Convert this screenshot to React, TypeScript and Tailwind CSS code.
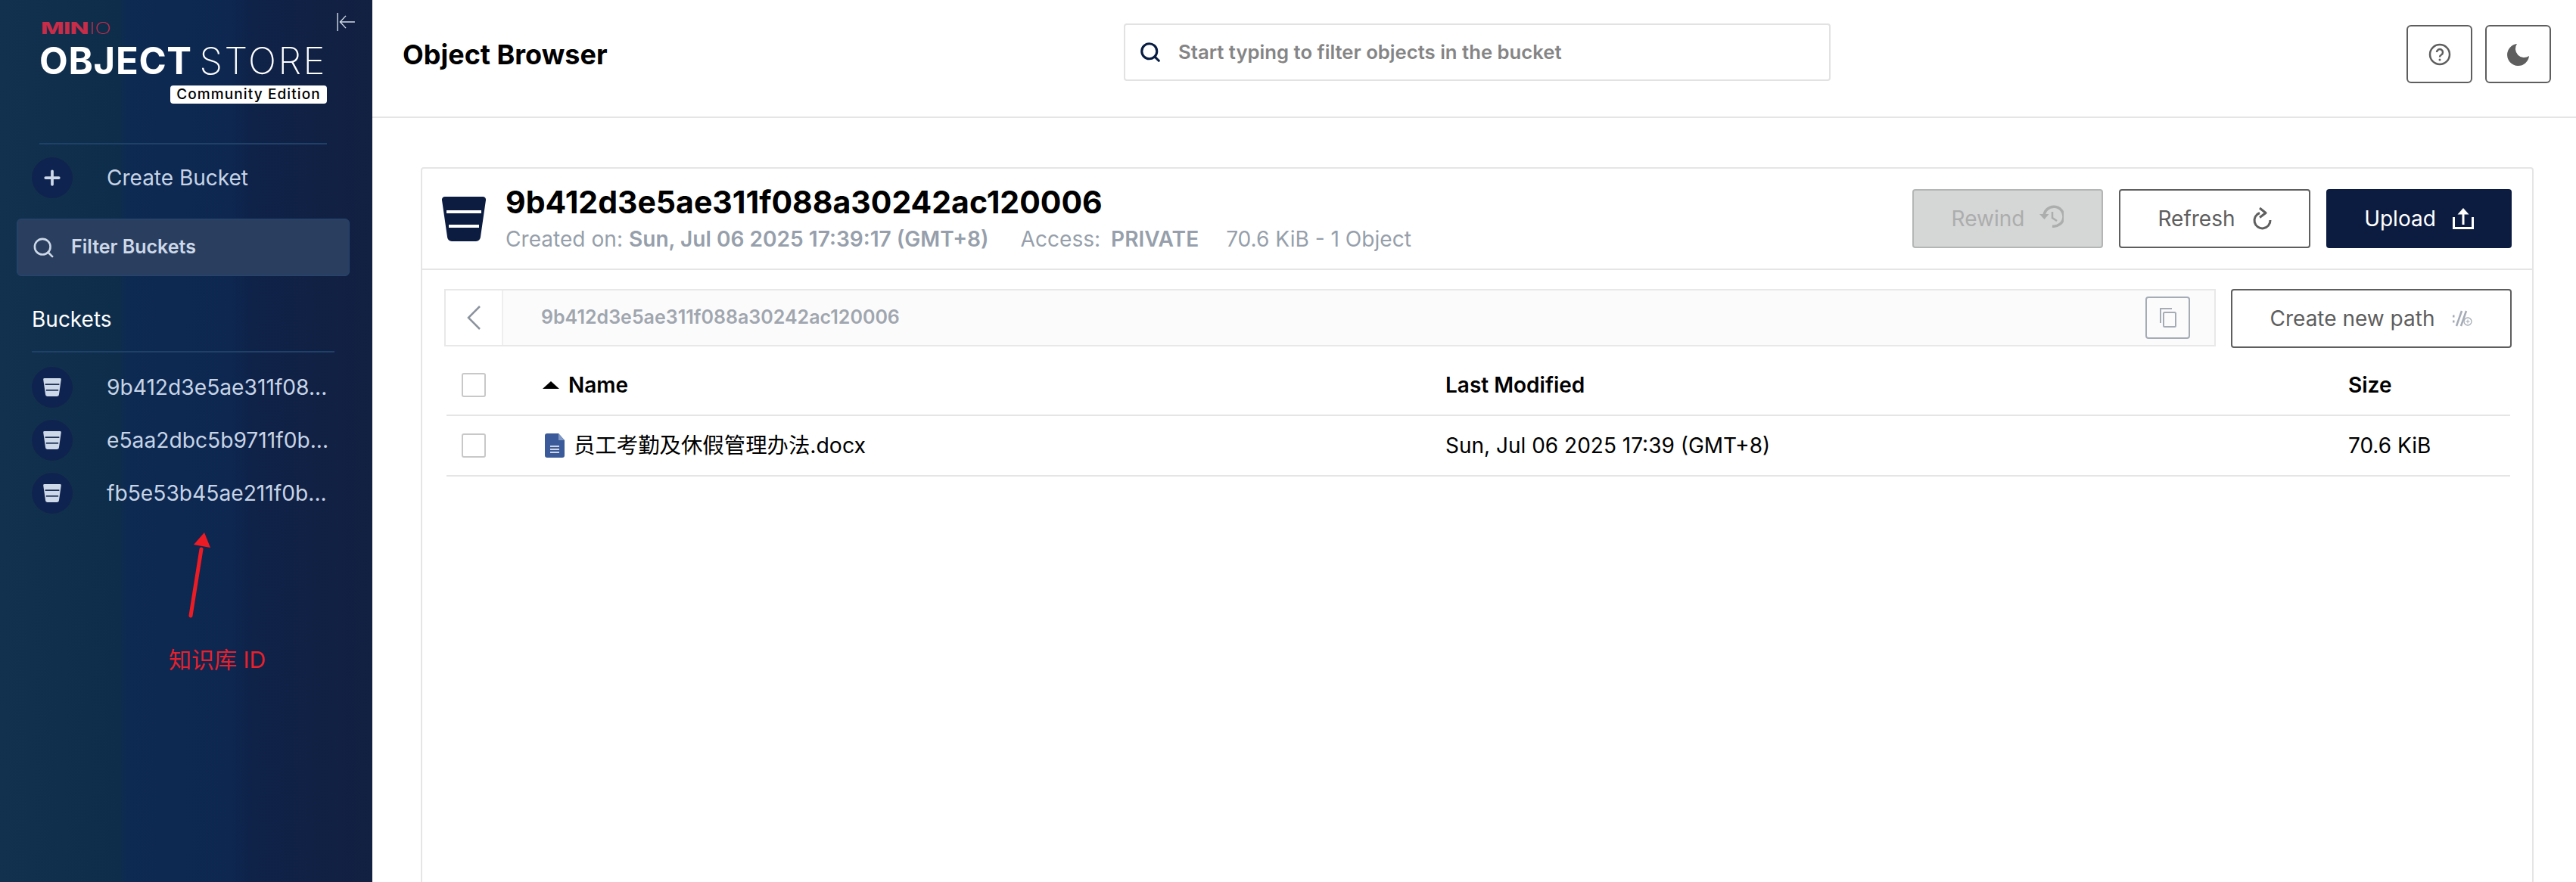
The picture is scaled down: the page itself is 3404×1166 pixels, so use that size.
import { Plus, Search } from 'lucide-react';

const font = "font-['Inter','Noto_Sans_CJK_SC',sans-serif]";
const buckets = ['9b412d3e5ae311f08...', 'e5aa2dbc5b9711f0b...', 'fb5e53b45ae211f0b...'];

function BucketIcon({ className, stripe }: { className: string; stripe: string }) {
  return (
    <svg viewBox="0 0 58 59" className={className}>
      <path d="M4 0h50a4 4 0 0 1 4 4.500L51 53a6 6 0 0 1-6 6H13a6 6 0 0 1-6-6L0 4.500A4 4 0 0 1 4 0z" fill="currentColor" />
      <rect x="6" y="18" width="46" height="4" fill={stripe} />
      <rect x="9" y="37" width="40" height="4" fill={stripe} />
    </svg>
  );
}

function Checkbox() {
  return <div className="h-[32px] w-[32px] rounded-[3px] border-2 border-[#c8c8c8] bg-white" />;
}

function OutlineButton({ label, children, width }: { label: string; children: React.ReactNode; width: string }) {
  return (
    <div className={`flex h-[78px] items-center justify-center gap-[22px] rounded-[4px] border-2 border-[#5e5e5e] bg-white text-[28px] text-[#5e5e5e] ${width}`}>
      {label}
      {children}
    </div>
  );
}

export default function App() {
  return (
    <div className={`flex h-screen w-full overflow-hidden bg-white ${font}`}>
      {/* sidebar */}
      <aside className="relative flex w-[492px] shrink-0 flex-col bg-[linear-gradient(90deg,#12314f_0%,#0e2d4b_32%,#0d2a52_34%,#0d2750_62%,#0f2248_68%,#122041_100%)]">
        <svg viewBox="0 0 24 24" className="absolute left-[444px] top-[16px] h-[26px] w-[26px]" fill="none" stroke="#d5dde8" strokeWidth="1.300">
          <path d="M2 1v22M23 12H5M12 4.500L5 12l7 7.500" />
        </svg>

        <div className="ml-[52px] mr-[60px] flex flex-col border-b-2 border-[#1f4168] pb-[52px] pt-[27px]">
          <div className="flex h-[20px] items-center pl-[2px] text-[21px] leading-none text-[#c72c48]">
            <span className="origin-left scale-x-[1.55] font-extrabold tracking-[-0.5px]">MIN</span>
            <span className="ml-[24px] origin-left scale-x-[1.35] font-extralight">IO</span>
          </div>
          <div className="mt-[8px] flex h-[50px] items-center justify-between whitespace-nowrap text-[49px] leading-none text-white">
            <span className="font-bold tracking-[0.7px]">OBJECT</span>
            <span className="font-extralight tracking-[2.500px]">STORE</span>
          </div>
          <div className="mt-[8px] flex justify-end">
            <span className="flex h-[24px] w-[207px] items-center justify-center rounded-[4px] bg-white text-[19px] font-medium tracking-[1.100px] text-black">Community Edition</span>
          </div>
        </div>

        <div className="ml-[42px] mt-[17px] flex items-center">
          <div className="flex h-[54px] w-[54px] items-center justify-center rounded-full border border-[#11234a] bg-[#0f2350]">
            <Plus className="h-[30px] w-[30px] text-[#cdd8e8]" strokeWidth={3} />
          </div>
          <span className="ml-[45px] text-[28px] text-[#c7d4e6]">Create Bucket</span>
        </div>

        <div className="ml-[22px] mt-[27px] flex h-[76px] w-[440px] items-center rounded-[6px] border border-[#24466f] bg-[#2a3f60] pl-[19px]">
          <Search className="h-[31px] w-[31px] text-[#cdd8e8]" strokeWidth={2} />
          <span className="ml-[21px] text-[25px] font-semibold text-[#cdd8e8]">Filter Buckets</span>
        </div>

        <div className="ml-[42px] mr-[50px] mt-[38px] border-b-2 border-[#1f4168] pb-[23px] text-[28px] leading-[38px] text-white">Buckets</div>

        <div className="ml-[42px] mt-[19px] flex flex-col gap-[16px]">
          {buckets.map((b) => (
            <div key={b} className="flex items-center">
              <div className="flex h-[54px] w-[54px] items-center justify-center rounded-full border border-[#11234a] bg-[#0f2350]">
                <BucketIcon className="h-[24px] w-[24px] text-[#cdd8e8]" stripe="#16294f" />
              </div>
              <span className="ml-[45px] whitespace-nowrap text-[28.200px] text-[#c7d4e6]">{b}</span>
            </div>
          ))}
        </div>

        {/* red annotation drawn over the screenshot */}
        <svg viewBox="0 0 40 130" className="absolute left-[240px] top-[700px] h-[130px] w-[40px]">
          <path d="M12 114L26 26" stroke="#ed1c24" strokeWidth="5" strokeLinecap="round" />
          <path d="M30 4L16 20l22 4z" fill="#ed1c24" />
        </svg>
        <span className="absolute left-[223px] top-[852px] text-[30px] leading-[40px] text-[#e8202c]">知识库 ID</span>
      </aside>

      {/* main */}
      <main className="flex min-w-0 flex-1 flex-col">
        <header className="flex h-[156px] shrink-0 items-start border-b-2 border-[#e5e5e5] pl-[40px] pr-[33px]">
          <h1 className="mt-[46px] w-[953px] text-[36px] font-bold leading-[52px] text-black">Object Browser</h1>
          <div className="mt-[31px] flex h-[76px] w-[934px] items-center rounded-[4px] border-2 border-[#e2e2e2] pl-[18px]">
            <Search className="h-[30px] w-[30px] text-[#081c42]" strokeWidth={2.500} />
            <span className="ml-[22px] text-[25.700px] font-semibold text-[#858585]">Start typing to filter objects in the bucket</span>
          </div>
          <div className="ml-auto mt-[33px] flex gap-[17px]">
            <div className="flex h-[77px] w-[87px] items-center justify-center rounded-[6px] border-2 border-[#5e5e5e]">
              <svg viewBox="0 0 30 30" className="h-[30px] w-[30px]" fill="none" stroke="#5e5e5e" strokeWidth="2.500">
                <circle cx="15" cy="15" r="13" />
                <path d="M11 12a4 4 0 1 1 6 3.500c-1.500.8-2 1.500-2 3" />
                <circle cx="15" cy="22" r="1.500" fill="#5e5e5e" stroke="none" />
              </svg>
            </div>
            <div className="flex h-[77px] w-[87px] items-center justify-center rounded-[6px] border-2 border-[#5e5e5e]">
              <svg viewBox="0 0 30 30" className="h-[30px] w-[30px]" fill="#5e5e5e">
                <path d="M13 1A14.500 14.500 0 1 0 29 17 11.500 11.500 0 0 1 13 1z" />
              </svg>
            </div>
          </div>
        </header>

        <div className="flex min-h-0 flex-1 flex-col pl-[64px] pr-[56px] pt-[65px]">
          {/* bucket info */}
          <div className="flex h-[136px] shrink-0 items-center rounded-t-[4px] border-2 border-[#e5e5e5] pl-[26px] pr-[27px]">
            <BucketIcon className="h-[59px] w-[58px] text-[#0c1c40]" stripe="#ffffff" />
            <div className="ml-[26px] flex flex-col">
              <div className="text-[41px] font-bold leading-[46px] text-black">9b412d3e5ae311f088a30242ac120006</div>
              <div className="mt-[8px] flex text-[28.100px] leading-[36px] text-[#969fab]">
                <span>Created on: <b className="font-semibold">Sun, Jul 06 2025 17:39:17 (GMT+8)</b></span>
                <span className="ml-[42px]">Access: <b className="ml-[6px] font-semibold">PRIVATE</b></span>
                <span className="ml-[36px]">70.6 KiB - 1 Object</span>
              </div>
            </div>
            <div className="ml-auto flex gap-[21px]">
              <div className="flex h-[78px] w-[252px] items-center justify-center gap-[20px] rounded-[4px] border-2 border-[#b4b5b5] bg-[#d5d6d6] text-[28px] text-[#acadad]">
                Rewind
                <svg viewBox="0 0 32 30" className="mb-[6px] h-[30px] w-[32px]" fill="none" stroke="#acadad" strokeWidth="3.500">
                  <path d="M6 15A13 13 0 1 1 17 28" />
                  <path d="M0 12l6.500 7 6-7z" fill="#acadad" stroke="none" />
                  <path d="M17 9v8l6 4" strokeWidth="2.500" />
                </svg>
              </div>
              <OutlineButton label="Refresh" width="w-[253px]">
                <svg viewBox="0 0 26 30" className="h-[30px] w-[26px]" fill="none" stroke="#5e5e5e" strokeWidth="3">
                  <path d="M10 7.500A10.500 10.500 0 1 0 24 17" />
                  <path d="M10 1l8 6.500-8 6" strokeLinejoin="round" />
                </svg>
              </OutlineButton>
              <div className="flex h-[78px] w-[245px] items-center justify-center gap-[22px] rounded-[4px] bg-[#0c1c40] text-[28px] text-white">
                Upload
                <svg viewBox="0 0 28 28" className="h-[28px] w-[28px]" fill="none" stroke="#ffffff" strokeWidth="3">
                  <path d="M14 22V4" />
                  <path d="M14 0l7.500 8.500h-15z" fill="#ffffff" stroke="none" />
                  <path d="M1.500 12v14.500h25V12" />
                </svg>
              </div>
            </div>
          </div>

          {/* object list */}
          <div className="flex min-h-0 flex-1 flex-col border-x-2 border-[#e5e5e5] pl-[29px] pr-[27px] pt-[25px]">
            <div className="flex items-start justify-between">
              <div className="flex h-[76px] w-[2341px] items-stretch border-2 border-[#e8e8e8]">
                <div className="flex w-[74px] items-center justify-center bg-white">
                  <svg viewBox="0 0 20 32" className="h-[32px] w-[20px]" fill="none" stroke="#8b939e" strokeWidth="2.500">
                    <path d="M18 1L3 16l15 15" />
                  </svg>
                </div>
                <div className="flex flex-1 items-center border-l-2 border-[#eeeeee] bg-[#fbfbfb] pl-[50px] pr-[32px]">
                  <span className="text-[25px] font-semibold text-[#a0a6af]">9b412d3e5ae311f088a30242ac120006</span>
                  <div className="ml-auto flex h-[56px] w-[59px] items-center justify-center rounded-[4px] border-2 border-[#a5acb6]">
                    <svg viewBox="0 0 22 26" className="h-[26px] w-[22px]" fill="none" stroke="#a5acb6" strokeWidth="2">
                      <path d="M1 20V1h15" />
                      <rect x="5" y="6" width="16" height="19" rx="1.500" />
                    </svg>
                  </div>
                </div>
              </div>
              <OutlineButton label="Create new path" width="w-[371px]">
                <svg viewBox="0 0 28 22" className="h-[22px] w-[28px]" fill="none" stroke="#a5acb6" strokeWidth="2.500">
                  <path d="M2 8h2.500M2 15h2.500" strokeWidth="3" />
                  <path d="M7 21L14 1M13 21L20 1" />
                  <circle cx="22" cy="15" r="5" strokeWidth="1.300" />
                  <path d="M22 12.500v5M19.500 15h5" strokeWidth="1" />
                </svg>
              </OutlineButton>
            </div>

            <div className="ml-[3px] mr-[2px] mt-[10px] flex h-[80px] shrink-0 items-center border-b-2 border-[#e5e5e5] pl-[20px] text-[28px] font-semibold text-black">
              <Checkbox />
              <div className="ml-[75px] flex w-[1193px] items-center">
                <span className="h-0 w-0 border-x-[11px] border-b-[10px] border-x-transparent border-b-black" />
                <span className="ml-[12px]">Name</span>
              </div>
              <div className="w-[1193px]">Last Modified</div>
              <div>Size</div>
            </div>
            <div className="ml-[3px] mr-[2px] flex h-[80px] shrink-0 items-center border-b-2 border-[#e5e5e5] pl-[20px] text-[28px] text-black">
              <Checkbox />
              <div className="ml-[78px] flex w-[1190px] items-center">
                <svg viewBox="0 0 26 32" className="h-[32px] w-[26px]">
                  <path d="M3 0h15l8 9v20a3 3 0 0 1-3 3H3a3 3 0 0 1-3-3V3a3 3 0 0 1 3-3z" fill="#3a5a99" />
                  <path d="M18 0l8 9h-8z" fill="#7f97c4" />
                  <path d="M7 17h12M7 21h12M7 25h12" stroke="#ffffff" strokeWidth="1.500" />
                </svg>
                <span className="ml-[12px] text-[28.400px]">员工考勤及休假管理办法.docx</span>
              </div>
              <div className="w-[1193px]">Sun, Jul 06 2025 17:39 (GMT+8)</div>
              <div>70.6 KiB</div>
            </div>
          </div>
        </div>
      </main>
    </div>
  );
}
